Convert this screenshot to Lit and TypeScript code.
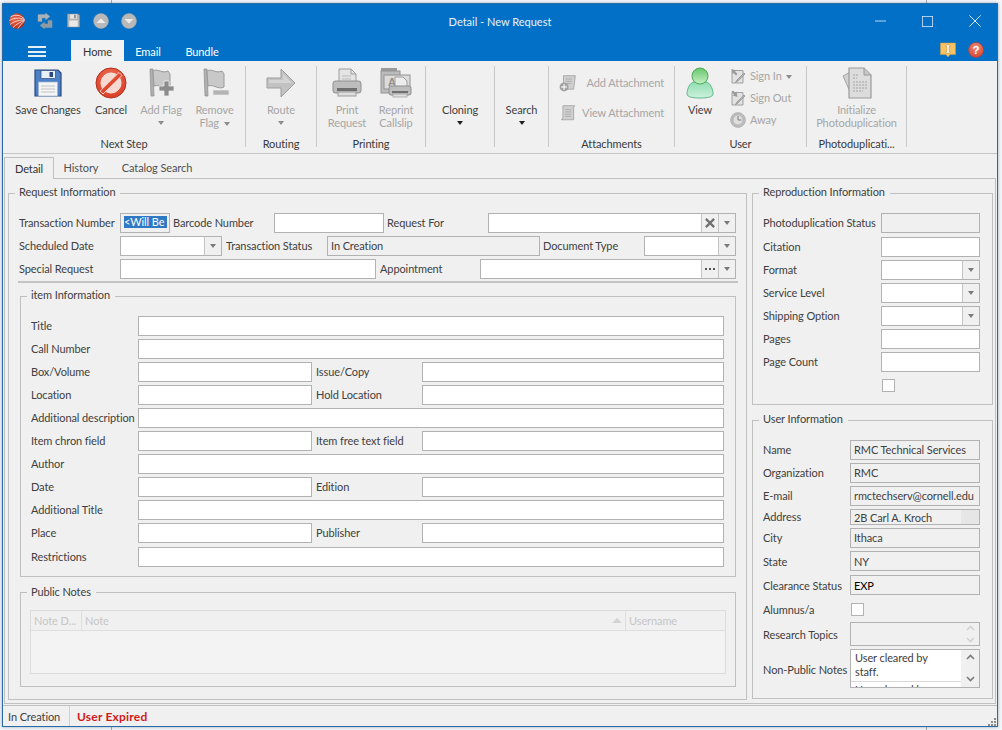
import { LitElement, html, css, svg, TemplateResult } from "lit";
import { customElement } from "lit/decorators.js";

const ic = (w: number, h: number, body: unknown) => html`<svg class="ic" width=${w} height=${h} viewBox="0 0 32 32">${body}</svg>`;

const icons: Record<string, unknown> = {
    logo: svg`<defs><radialGradient id="lg" cx=".35" cy=".4" r=".8"><stop offset="0" stop-color="#f0694a"/><stop offset="1" stop-color="#a81e12"/></radialGradient></defs>
        <circle cx="16" cy="16" r="15.5" fill="url(#lg)"/>
        <g fill="none" stroke="#fff" stroke-width="1.5"><path d="M31 12C24 4 12 2 3 8"/><path d="M31 13C22 9 10 9 1 15"/><path d="M31 14C22 14 11 16 2 23"/><path d="M31 15C23 18 15 22 8 29"/><path d="M31 16C26 20 22 25 18 31"/></g>`,
    refresh: svg`<g stroke="#8d98a1" stroke-width="1"><path d="M2 3h15V0l9 7-9 7v-4H10v7H2z" fill="#a9b3bb"/><path d="M30 29H15v3l-9-7 9-7v4h7v-7h8z" fill="#8f9aa3"/></g>`,
    qsave: svg`<path d="M3 2h23l3 3v25H3z" fill="#b4b4b4" stroke="#8f8f8f"/><rect x="9" y="3" width="14" height="9" fill="#e6e6e6"/><rect x="17" y="4" width="4" height="7" fill="#8f8f8f"/><rect x="7" y="16" width="18" height="13" fill="#e9e9e9"/>`,
    up: svg`<circle cx="16" cy="16" r="15" fill="#b9b9b9" stroke="#a4a4a4"/><path d="M7 20l9-9 9 9z" fill="#ededed"/>`,
    down: svg`<circle cx="16" cy="16" r="15" fill="#b9b9b9" stroke="#a4a4a4"/><path d="M7 12l9 9 9-9z" fill="#ededed"/>`,
    min: svg`<path d="M0 16h32" stroke="#cfe2f3" stroke-width="2.6"/>`,
    max: svg`<rect x="1" y="1" width="30" height="30" fill="none" stroke="#dbe9f6" stroke-width="2.6"/>`,
    close: svg`<path d="M1 1l30 30M31 1L1 31" stroke="#dbe9f6" stroke-width="2.6"/>`,
    info: svg`<path d="M1 2h30v23H20l-4 5-4-5H1z" fill="#f7c262" stroke="#d69a3a"/><path d="M12 6h8v3h-2v10h2v3h-8v-3h2V9h-2z" fill="#fff" stroke="#9a6a20" stroke-width=".7"/>`,
    help: svg`<defs><radialGradient id="hg" cx=".5" cy=".3" r=".8"><stop offset="0" stop-color="#f08a78"/><stop offset="1" stop-color="#d23c28"/></radialGradient></defs><circle cx="16" cy="16" r="15" fill="url(#hg)" stroke="#c03a28"/><text x="16" y="24" font-family="Liberation Sans" font-weight="700" font-size="23" text-anchor="middle" fill="#fff">?</text>`,
    save: svg`<path d="M3 3h23l3 3v23H3z" fill="#4c80c6" stroke="#2b4a80" stroke-width="1.2"/><rect x="9" y="3.600" width="14.500" height="8" fill="#e9eff7" stroke="#2b4a80" stroke-width=".7"/><rect x="17.500" y="5" width="3.500" height="5" fill="#2b4a80"/><rect x="6.500" y="15" width="19" height="14" fill="#f5f5f5" stroke="#9fb4d0" stroke-width=".7"/><path d="M9 19h14M9 22h14M9 25h14" stroke="#c2c2c2"/>`,
    cancel: svg`<defs><radialGradient id="cg" cx=".5" cy=".35" r=".75"><stop offset="0" stop-color="#f2745a"/><stop offset="1" stop-color="#d5361f"/></radialGradient></defs><circle cx="16" cy="16" r="15" fill="url(#cg)" stroke="#b2301d"/><circle cx="16" cy="16" r="10" fill="#f6d9d0" stroke="#f9e6e0"/><path d="M24 5.500l3 3L8 27l-3-3z" fill="#e14a31" stroke="#f9e6e0" stroke-width=".8"/>`,
    addFlag: svg`<path d="M5 2h3l1 27H6z" fill="#b0b0b0" stroke="#8c8c8c" stroke-width=".7"/><path d="M8 4c5-3 9 3 15 0l2 3v13c-6 3-10-3-16-1z" fill="#c8c8c8" stroke="#9a9a9a"/><path d="M19 14h5v5h5v5h-5v5h-5v-5h-5v-5h5z" fill="#8c8c8c" stroke="#eee" stroke-width=".8"/>`,
    removeFlag: svg`<path d="M5 2h3l1 27H6z" fill="#b0b0b0" stroke="#8c8c8c" stroke-width=".7"/><path d="M8 4c5-3 9 3 15 0l2 3v13c-6 3-10-3-16-1z" fill="#c8c8c8" stroke="#9a9a9a"/><rect x="14" y="23" width="16" height="5" fill="#b4b4b4" stroke="#eee" stroke-width=".6"/>`,
    route: svg`<path d="M2 11h14V2l14 14-14 14v-9H2z" fill="#c2c2c2" stroke="#9d9d9d"/><path d="M4 13h14V7l9 9H4z" fill="#d4d4d4"/>`,
    print: svg`<path d="M8 2h12l5 5v10H8z" fill="#e4e4e4" stroke="#9d9d9d"/><path d="M20 2v5h5" fill="none" stroke="#9d9d9d"/><rect x="2" y="14" width="28" height="12" rx="2.500" fill="#bdbdbd" stroke="#8f8f8f"/><rect x="6" y="21" width="20" height="3" fill="#6f6f6f"/><rect x="7" y="25" width="18" height="4" fill="#dedede" stroke="#9d9d9d"/><path d="M11 9h9M11 12h9" stroke="#b8b8b8"/>`,
    reprint: svg`<rect x="1" y="1" width="16" height="3" fill="#9a9a9a"/><rect x="1" y="4" width="19" height="22" fill="#bcbcbc" stroke="#929292"/><rect x="4" y="8" width="26" height="14" fill="#dcdcdc" stroke="#929292"/><text x="8" y="19" font-family="Liberation Sans" font-weight="700" font-size="11" fill="#909090">A</text><path d="M15 10h8l4 4v7H15z" fill="#ececec" stroke="#9d9d9d"/><rect x="9" y="19" width="22" height="9" rx="2" fill="#bdbdbd" stroke="#8f8f8f"/><rect x="12" y="24" width="16" height="2" fill="#6f6f6f"/><rect x="13" y="27" width="14" height="3" fill="#dedede" stroke="#9d9d9d" stroke-width=".7"/>`,
    addAttach: svg`<path d="M8 3h21l-3 24H8z" fill="#d0d0d0" stroke="#a2a2a2" stroke-width="1.500"/><path d="M12 9h11M12 13h11M12 17h10" stroke="#a8a8a8" stroke-width="1.500"/><circle cx="9" cy="23" r="8" fill="#a2a2a2"/><path d="M9 18v10M4 23h10" stroke="#eee" stroke-width="2.600"/>`,
    viewAttach: svg`<path d="M7 3h21l-2 3v22H4l3-3z" fill="#d0d0d0" stroke="#a2a2a2" stroke-width="1.500"/><path d="M11 10h11M11 14h11M11 18h11M11 22h11" stroke="#a8a8a8" stroke-width="1.500"/>`,
    user: svg`<defs><linearGradient id="ug" x1="0" y1="0" x2="0" y2="1"><stop offset="0" stop-color="#66c76a"/><stop offset="1" stop-color="#c5efc6"/></linearGradient><linearGradient id="ub" x1="0" y1="0" x2="0" y2="1"><stop offset="0" stop-color="#8fddb0"/><stop offset="1" stop-color="#cdf2dd"/></linearGradient></defs><path d="M9 15c-4 2-6 8-6 12 0 3 6 4 13 4s13-1 13-4c0-4-2-10-6-12z" fill="url(#ub)" stroke="#62b78c"/><circle cx="16" cy="9" r="8" fill="url(#ug)" stroke="#4fa958"/>`,
    signIn: svg`<path d="M4 5h22v25H4z" fill="#e2e2e2" stroke="#989898" stroke-width="1.800"/><path d="M3 2l10 3-3 2 5 5-3 3-5-5-2 3z" fill="#9a9a9a"/><path d="M28 10L14 24l-3 5 5-3 14-14z" fill="#b8b8b8" stroke="#8a8a8a" stroke-width="1.400"/>`,
    signOut: svg`<path d="M4 5h22v25H4z" fill="#e2e2e2" stroke="#989898" stroke-width="1.800"/><path d="M15 14L5 11l3-2-5-5 3-3 5 5 2-3z" fill="#9a9a9a"/><path d="M28 10L14 24l-3 5 5-3 14-14z" fill="#b8b8b8" stroke="#8a8a8a" stroke-width="1.400"/>`,
    clock: svg`<circle cx="16" cy="16" r="15" fill="#bdbdbd" stroke="#a2a2a2"/><circle cx="16" cy="16" r="10" fill="#dedede" stroke="#a2a2a2"/><path d="M16 8v8h7" fill="none" stroke="#7d7d7d" stroke-width="2"/>`,
    init: svg`<path d="M2 9l11-6 6 22-8 4z" fill="#d2d2d2" stroke="#a4a4a4"/><path d="M8 1h15l7 7v23H8z" fill="#dcdcdc" stroke="#9a9a9a" stroke-width="1.200"/><path d="M23 1v7h7" fill="#c6c6c6" stroke="#9a9a9a"/><path d="M12 8h6M12 11h4M12 15h14M12 18h14M12 21h14M12 24h10" stroke="#a4a4a4" stroke-dasharray="2 1"/>`,
    clear: svg`<path d="M5 5l22 22M27 5L5 27" stroke="#707070" stroke-width="6"/>`,
};

const icon = (name: string, w = 32, h = w) => ic(w, h, icons[name]);

const chevUp = html`<svg class="chev" width="9" height="6" viewBox="0 0 9 6"><path d="M1 5l3.500-3.500L8 5" fill="none" stroke="currentColor" stroke-width="1.600"/></svg>`;
const chevDown = html`<svg class="chev" width="9" height="6" viewBox="0 0 9 6"><path d="M1 1l3.500 3.500L8 1" fill="none" stroke="currentColor" stroke-width="1.600"/></svg>`;

@customElement("app-root")
export class AppRoot extends LitElement {
    static styles = css`
        :host {
            display: block;
            height: 730px;
            overflow: hidden;
            box-sizing: border-box;
            padding: 3px 0 0 2px;
            background:
                linear-gradient(#a9a9a9, #a9a9a9) 111px 0 / 1px 100% no-repeat,
                linear-gradient(#a9a9a9, #a9a9a9) 926px 0 / 1px 100% no-repeat,
                #f4f7fa;
            font-family: Lato, Roboto, sans-serif;
            font-size: 11px;
            letter-spacing: -0.1px;
            color: #404040;
        }
        label, .rbtn, .g-label, .row, .small { white-space: nowrap; }
        label { box-sizing: border-box; padding-bottom: 2px; }
        label.low { padding-bottom: 0; }
        label.lower { padding-bottom: 0; padding-top: 2px; }
        .ic { display: block; flex: none; }
        .window {
            box-sizing: border-box;
            width: 996px;
            height: 724px;
            border: 1px solid #2a6ba6;
            background: #f0f0f0;
            display: flex;
            flex-direction: column;
            box-shadow: 0 0 3px rgba(60, 90, 120, 0.5);
        }

        /* title bar */
        .chrome { background: #0170c6; height: 57px; flex: none; color: #fff; }
        .title-row { display: grid; grid-template-columns: 1fr auto 1fr; align-items: center; height: 36px; box-sizing: border-box; padding-bottom: 2px; }
        .quick { display: flex; }
        .quick span { width: 28px; display: flex; justify-content: center; }
        .title { font-size: 11px; letter-spacing: 0; color: #eaf3fb; }
        .win-ctl { display: flex; justify-content: flex-end; align-items: center; gap: 36px; padding-right: 16px; }
        .tab-row { display: flex; height: 21px; }
        .burger { width: 68px; display: flex; flex-direction: column; align-items: center; justify-content: center; gap: 2.500px; padding-top: 2px; box-sizing: border-box; }
        .burger i { display: block; width: 18px; height: 2px; background: #e6f0f9; }
        .rtab { display: flex; align-items: center; justify-content: center; padding-top: 2px; box-sizing: border-box; }
        .rtab.home { width: 53px; background: #f2f2f2; color: #333; }
        .rtab.email { width: 48px; }
        .rtab.bundle { width: 60px; }
        .tab-right { margin-left: auto; display: flex; gap: 12px; padding: 2px 13px 0 0; }

        /* ribbon */
        .ribbon { flex: none; height: 93px; border-bottom: 1px solid #c6c6c6; box-sizing: border-box; display: flex; padding-top: 5px; }
        .group {
            box-sizing: border-box;
            height: 86px;
            display: flex;
            flex-direction: column;
            background: linear-gradient(#c8c8c8, #c8c8c8) right top / 1px 81px no-repeat;
        }
        .g-next { width: 243px; }
        .g-route { width: 71px; }
        .g-print { width: 109px; }
        .g-clone { width: 69px; }
        .g-search { width: 54px; }
        .g-attach { width: 126px; }
        .g-user { width: 132px; }
        .g-photo { width: 100px; }
        .g-body { display: flex; flex: 1; padding-right: 1px; }
        .g-next .g-body { padding-left: 6px; }
        .g-print .g-body { padding-left: 5px; }
        .g-label { height: 16px; line-height: 16px; text-align: center; padding-right: 1px; color: #3a3a3a; }
        .rbtn { display: flex; flex-direction: column; align-items: center; padding-top: 1px; text-align: center; line-height: 13px; flex: 1; }
        .rbtn .ic, .rbtn .spacer { height: 32px; margin-bottom: 4px; }
        .rbtn.w78 { flex: 0 0 78px; }
        .rbtn.w48 { flex: 0 0 48px; }
        .rbtn.w50 { flex: 0 0 50px; }
        .rbtn.w52 { flex: 0 0 52px; }
        .rbtn.w55 { flex: 0 0 55px; }
        .off { color: #a6a6a6; }
        .caret { display: inline-block; width: 0; height: 0; border: 3px solid transparent; border-top: 4px solid #8c8c8c; border-bottom: 0; vertical-align: middle; margin-left: 2px; }
        .caret.solo { display: block; margin: 5px auto 0; }
        .caret.dark { border-top-color: #202020; }
        .attach { flex-direction: column; gap: 8px; padding-top: 6px; }
        .attach .row { height: 22px; display: flex; align-items: center; padding: 0 10px; justify-content: space-between; }
        .attach .row span { padding-bottom: 2px; }
        .view { flex: 0 0 50px; }
        .small { display: flex; flex-direction: column; gap: 2px; padding-left: 5px; }
        .small div { height: 20px; display: flex; align-items: center; gap: 4px; }
        .small span { padding-bottom: 2px; }

        /* tabs */
        .tabs { display: flex; height: 21px; margin: 3px 1px 0; flex: none; position: relative; }
        .tab { display: flex; align-items: center; justify-content: center; box-sizing: border-box; color: #505050; }
        .tab.detail { width: 50px; height: 22px; background: #f0f0f0; border: 1px solid #c0c0c0; border-bottom: 0; color: #333; }
        .tab.history { width: 54px; }
        .tab.catalog { width: 98px; }
        .pane {
            box-sizing: border-box;
            flex: none;
            height: 526px;
            margin: 0 1px;
            border: 1px solid #c0c0c0;
            padding: 7px 2px 3px 3px;
            display: flex;
            gap: 5px;
        }

        /* fieldsets */
        fieldset { box-sizing: border-box; margin: 0; min-width: 0; border: 1px solid #c0c0c0; padding: 0 0 0 9px; }
        legend { margin-left: -3px; padding: 0 5px 0 4px; line-height: 12px; height: 15px; color: #404040; }
        .left { width: 739px; flex: none; padding-top: 12px; padding-bottom: 10px; }
        .right { width: 241px; flex: none; display: flex; flex-direction: column; gap: 8px; }
        .repro { padding-top: 12px; padding-bottom: 9px; }
        .userinfo { padding-top: 12px; padding-bottom: 10px; }

        .req-rows { display: flex; flex-direction: column; gap: 3px; margin-left: 1px; width: 717px; }
        .req-row { display: grid; height: 20px; align-items: center; }
        .r1 { grid-template-columns: 101px 50px 104px 110px 104px 248px; }
        .r2 { grid-template-columns: 101px 102px 105px 213px 104px 92px; }
        .r3 { grid-template-columns: 101px 256px 104px 256px; }
        .pl3 { padding-left: 3px; }
        .pl4 { padding-left: 4px; }
        .divider { width: 720px; height: 2px; background: #c4c4c4; margin-top: 2px; }

        .item { width: 716px; margin: 6px 0 0 2px; padding-top: 12px; padding-bottom: 10px; }
        .item-grid { display: grid; margin-left: 1px; grid-template-columns: 107px 174px 110px 302px; grid-auto-rows: 20px; row-gap: 3px; align-items: center; }
        .span3 { grid-column: span 3; }
        .last { margin-top: 1px; }
        label.last { padding-bottom: 0; }

        .notes { width: 716px; margin: 8px 0 0 2px; padding-top: 10px; padding-bottom: 12px; }
        .notes legend { line-height: 14px; }
        .grid { box-sizing: border-box; width: 696px; height: 64px; border: 1px solid #dcdcdc; background: #f3f3f3; }
        .grid-head { display: grid; grid-template-columns: 51px 544px 99px; height: 20px; box-sizing: border-box; border-bottom: 1px solid #dedede; background: #f0f0f0; color: #c6c6c6; }
        .grid-head span { display: flex; align-items: center; padding-left: 3px; border-right: 1px solid #dedede; justify-content: space-between; white-space: nowrap; }
        .grid-head span:last-child { border-right: 0; }
        .sort { width: 0; height: 0; border: 5px solid transparent; border-bottom: 5px solid #d4d4d4; border-top: 0; margin-right: 3px; }

        .f {
            box-sizing: border-box;
            height: 20px;
            border: 1px solid #b2b2b2;
            background: #fff;
            display: flex;
            align-items: center;
            padding: 0 0 2px 3px;
            white-space: nowrap;
            overflow: hidden;
        }
        .f.ro { background: #f0f0f0; }
        .f.low { padding-bottom: 0; }
        .sel { background: #2f79c4; color: #fff; padding-right: 3px; line-height: 12px; }
        .val { flex: 1; }
        .dd { flex: none; width: 16px; align-self: stretch; background: #f0f0f0; border-left: 1px solid #c4c4c4; display: flex; align-items: center; justify-content: center; }
        .tri { width: 0; height: 0; border: 3.500px solid transparent; border-top: 4px solid #7a7a7a; border-bottom: 0; }
        .combo { padding: 0; }
        .dots { display: flex; gap: 2px; }
        .dots i { width: 2px; height: 2px; background: #555; display: block; }

        .form { display: grid; margin-left: 1px; row-gap: 3px; align-items: center; }
        .repro-form { grid-template-columns: 118px 99px; grid-template-rows: 21px repeat(7, 20px); }
        .user-form { grid-template-columns: 87px 130px; grid-template-rows: 20px 20px 20px 16px 20px 21px 21px 20px 24px 39px; }
        .form .f { align-self: start; }
        .f.h16 { height: 16px; padding-bottom: 0; }
        .f.h24 { height: 24px; padding: 0; }
        .f.h39 { height: 39px; padding: 0; }
        .f.dark { color: #000; }
        .check { box-sizing: border-box; width: 13px; height: 13px; border: 1px solid #b2b2b2; background: #fff; }
        .c2 { grid-column: 2; }
        .m1 { margin-left: 1px; }
        .bar { flex: none; margin-left: auto; width: 18px; align-self: stretch; background: #e6e6e6; }
        .scroll { flex: none; width: 18px; align-self: stretch; background: #f0f0f0; display: flex; flex-direction: column; align-items: center; justify-content: space-between; color: #7a7a7a; padding: 4px 0 5px; box-sizing: border-box; }
        .scroll.faint { color: #d2d2d2; padding: 2px 0; }
        .note-list { flex: 1; align-self: stretch; overflow: hidden; background: #fff; line-height: 14px; padding: 1px 0 0 4px; white-space: normal; }
        .note-item { border-bottom: 1px solid #d8d8d8; padding-bottom: 2px; margin: 0 -1px 1px -4px; padding-left: 4px; height: 28px; }

        /* status bar */
        .status { flex: none; height: 21px; margin-top: 1px; box-sizing: border-box; border-top: 1px solid #c0c0c0; display: flex; align-items: center; }
        .st { width: 67px; padding-left: 5px; box-sizing: border-box; border-right: 1px solid #d0d0d0; height: 100%; display: flex; align-items: center; }
        .exp { padding-left: 7px; color: #d11a1a; font-weight: 700; font-size: 12px; letter-spacing: 0.2px; }
        .grip { margin-left: auto; align-self: flex-end; margin-right: 1px; }
    `;

    private field(text = "", cls = "") {
        return html`<div class="f ${cls}">${text}</div>`;
    }

    private combo(extra?: TemplateResult) {
        return html`<div class="f combo"><span class="val"></span>${extra ? html`<span class="dd">${extra}</span>` : ""}<span class="dd"><i class="tri"></i></span></div>`;
    }

    private bigBtn(name: string, lines: unknown, cls = "", off = true) {
        return html`<div class="rbtn ${cls} ${off ? "off" : ""}">${icon(name)}<span>${lines}</span></div>`;
    }

    private itemRows() {
        const rows: [string, string?][] = [
            ["Title"], ["Call Number"], ["Box/Volume", "Issue/Copy"], ["Location", "Hold Location"],
            ["Additional description"], ["Item chron field", "Item free text field"], ["Author"],
            ["Date", "Edition"], ["Additional Title"], ["Place", "Publisher"], ["Restrictions"],
        ];
        return rows.map(([a, b], i) => {
            const last = i === rows.length - 1 ? "last" : "";
            return b
                ? html`<label>${a}</label><div class="f"></div><label class="pl4">${b}</label><div class="f"></div>`
                : html`<label class=${last}>${a}</label><div class="f span3 ${last}"></div>`;
        });
    }

    private ribbon() {
        const caret = html`<i class="caret solo"></i>`;
        const dark = html`<i class="caret solo dark"></i>`;
        return html`<div class="ribbon">
            <div class="group g-next">
                <div class="g-body">
                    ${this.bigBtn("save", "Save Changes", "w78", false)}
                    ${this.bigBtn("cancel", "Cancel", "w48", false)}
                    ${this.bigBtn("addFlag", html`Add Flag${caret}`, "w52")}
                    ${this.bigBtn("removeFlag", html`Remove<br />Flag <i class="caret"></i>`, "w55")}
                </div>
                <div class="g-label">Next Step</div>
            </div>
            <div class="group g-route">
                <div class="g-body">${this.bigBtn("route", html`Route${caret}`)}</div>
                <div class="g-label">Routing</div>
            </div>
            <div class="group g-print">
                <div class="g-body">
                    ${this.bigBtn("print", html`Print<br />Request`, "w50")}
                    ${this.bigBtn("reprint", html`Reprint<br />Callslip`, "w48")}
                </div>
                <div class="g-label">Printing</div>
            </div>
            <div class="group g-clone">
                <div class="g-body"><div class="rbtn"><div class="spacer"></div>Cloning${dark}</div></div>
            </div>
            <div class="group g-search">
                <div class="g-body"><div class="rbtn"><div class="spacer"></div>Search${dark}</div></div>
            </div>
            <div class="group g-attach">
                <div class="g-body attach">
                    <div class="row off">${icon("addAttach", 18)}<span>Add Attachment</span></div>
                    <div class="row off">${icon("viewAttach", 18)}<span>View Attachment</span></div>
                </div>
                <div class="g-label">Attachments</div>
            </div>
            <div class="group g-user">
                <div class="g-body">
                    <div class="rbtn view">${icon("user")}View</div>
                    <div class="small off">
                        <div>${icon("signIn", 16)}<span>Sign In <i class="caret"></i></span></div>
                        <div>${icon("signOut", 16)}<span>Sign Out</span></div>
                        <div>${icon("clock", 16)}<span>Away</span></div>
                    </div>
                </div>
                <div class="g-label">User</div>
            </div>
            <div class="group g-photo">
                <div class="g-body">${this.bigBtn("init", html`Initialize<br />Photoduplication`)}</div>
                <div class="g-label">Photoduplicati...</div>
            </div>
        </div>`;
    }

    private leftColumn() {
        return html`<fieldset class="left">
            <legend>Request Information</legend>
            <div class="req-rows">
                <div class="req-row r1">
                    <label>Transaction Number</label>
                    <div class="f ro"><span class="sel">&lt;Will Be</span></div>
                    <label class="pl3">Barcode Number</label>
                    <div class="f"></div>
                    <label class="pl3">Request For</label>
                    ${this.combo(icon("clear", 12))}
                </div>
                <div class="req-row r2">
                    <label>Scheduled Date</label>
                    ${this.combo()}
                    <label class="pl4">Transaction Status</label>
                    ${this.field("In Creation", "ro")}
                    <label class="pl3">Document Type</label>
                    ${this.combo()}
                </div>
                <div class="req-row r3">
                    <label>Special Request</label>
                    <div class="f"></div>
                    <label class="pl4">Appointment</label>
                    ${this.combo(html`<span class="dots"><i></i><i></i><i></i></span>`)}
                </div>
            </div>
            <div class="divider"></div>
            <fieldset class="item">
                <legend>item Information</legend>
                <div class="item-grid">${this.itemRows()}</div>
            </fieldset>
            <fieldset class="notes">
                <legend>Public Notes</legend>
                <div class="grid">
                    <div class="grid-head">
                        <span>Note D...</span>
                        <span>Note<i class="sort"></i></span>
                        <span>Username</span>
                    </div>
                </div>
            </fieldset>
        </fieldset>`;
    }

    private rightColumn() {
        const scrollFaint = html`<span class="scroll faint">${chevUp}${chevDown}</span>`;
        const scroll = html`<span class="scroll">${chevUp}${chevDown}</span>`;
        return html`<div class="right">
            <fieldset class="repro">
                <legend>Reproduction Information</legend>
                <div class="form repro-form">
                    <label>Photoduplication Status</label>${this.field("", "ro")}
                    <label>Citation</label>${this.field()}
                    <label>Format</label>${this.combo()}
                    <label>Service Level</label>${this.combo()}
                    <label>Shipping Option</label>${this.combo()}
                    <label>Pages</label>${this.field()}
                    <label>Page Count</label>${this.field()}
                    <div class="c2 check m1"></div>
                </div>
            </fieldset>
            <fieldset class="userinfo">
                <legend>User Information</legend>
                <div class="form user-form">
                    <label>Name</label>${this.field("RMC Technical Services", "ro")}
                    <label>Organization</label>${this.field("RMC", "ro")}
                    <label>E-mail</label>${this.field("rmctechserv@cornell.edu", "ro")}
                    <label>Address</label><div class="f ro h16">2B Carl A. Kroch<span class="bar"></span></div>
                    <label>City</label>${this.field("Ithaca", "ro")}
                    <label class="low">State</label>${this.field("NY", "ro low")}
                    <label class="low">Clearance Status</label>${this.field("EXP", "ro dark low")}
                    <label class="low">Alumnus/a</label><div class="check m1"></div>
                    <label class="low">Research Topics</label><div class="f ro h24"><span class="val"></span>${scrollFaint}</div>
                    <label class="lower">Non-Public Notes</label>
                    <div class="f h39">
                        <div class="note-list">
                            <div class="note-item">User cleared by<br />staff.</div>
                            <div>User cleared by</div>
                        </div>
                        ${scroll}
                    </div>
                </div>
            </fieldset>
        </div>`;
    }

    render() {
        return html`<div class="window">
            <div class="chrome">
                <div class="title-row">
                    <div class="quick">
                        <span>${icon("logo", 16)}</span>
                        <span>${icon("refresh", 16)}</span>
                        <span>${icon("qsave", 15)}</span>
                        <span>${icon("up", 16)}</span>
                        <span>${icon("down", 16)}</span>
                    </div>
                    <div class="title">Detail - New Request</div>
                    <div class="win-ctl">${icon("min", 11, 12)}${icon("max", 11)}${icon("close", 12)}</div>
                </div>
                <div class="tab-row">
                    <div class="burger"><i></i><i></i><i></i></div>
                    <div class="rtab home">Home</div>
                    <div class="rtab email">Email</div>
                    <div class="rtab bundle">Bundle</div>
                    <div class="tab-right">${icon("info", 16)}${icon("help", 16)}</div>
                </div>
            </div>
            ${this.ribbon()}
            <div class="tabs">
                <div class="tab detail">Detail</div>
                <div class="tab history">History</div>
                <div class="tab catalog">Catalog Search</div>
            </div>
            <div class="pane">${this.leftColumn()}${this.rightColumn()}</div>
            <div class="status">
                <div class="st">In Creation</div>
                <div class="exp">User Expired</div>
                <svg class="grip" width="9" height="9" viewBox="0 0 9 9"><path d="M7 1h2v2H7zM4 4h2v2H4zM7 4h2v2H7zM1 7h2v2H1zM4 7h2v2H4zM7 7h2v2H7z" fill="#8a8a8a"/></svg>
            </div>
        </div>`;
    }
}
